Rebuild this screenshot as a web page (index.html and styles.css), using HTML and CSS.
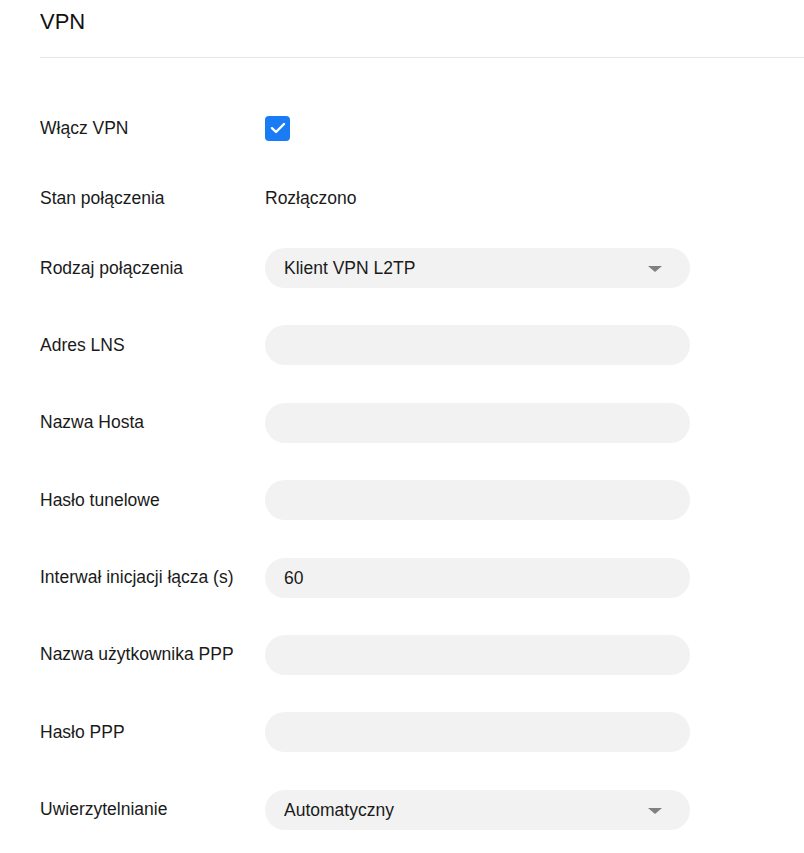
FILE: index.html
```html
<!DOCTYPE html>
<html lang="pl">
  <head>
    <meta charset="UTF-8" />
    <meta name="viewport" content="width=device-width, initial-scale=1.0" />
    <title>VPN</title>
    <link rel="stylesheet" href="styles.css">
  </head>

  <body>
    <div class="page">
      <h1 class="title">VPN</h1>

      <div class="form">
        <div class="row row-tight">
          <div class="label">Włącz VPN</div>
          <div class="control">
            <span class="checkbox">
              <svg width="16" height="12" viewBox="0 0 16 12">
                <path d="M2 6.2 L6 10 L14 2" fill="none" stroke="#fff" stroke-width="2.4" stroke-linecap="round" stroke-linejoin="round" />
              </svg>
            </span>
          </div>
        </div>

        <div class="row row-tight">
          <div class="label">Stan połączenia</div>
          <div class="control">Rozłączono</div>
        </div>

        <div class="row">
          <div class="label">Rodzaj połączenia</div>
          <div class="field select">Klient VPN L2TP<span class="arrow"></span></div>
        </div>

        <div class="row">
          <div class="label">Adres LNS</div>
          <div class="field"></div>
        </div>

        <div class="row">
          <div class="label">Nazwa Hosta</div>
          <div class="field"></div>
        </div>

        <div class="row">
          <div class="label">Hasło tunelowe</div>
          <div class="field"></div>
        </div>

        <div class="row">
          <div class="label">Interwał inicjacji łącza (s)</div>
          <div class="field">60</div>
        </div>

        <div class="row">
          <div class="label">Nazwa użytkownika PPP</div>
          <div class="field"></div>
        </div>

        <div class="row">
          <div class="label">Hasło PPP</div>
          <div class="field"></div>
        </div>

        <div class="row">
          <div class="label">Uwierzytelnianie</div>
          <div class="field select">Automatyczny<span class="arrow"></span></div>
        </div>
      </div>
    </div>
  </body>
</html>
```

FILE: styles.css
```css
body {
  margin: 0;
  background-color: #fff;
  color: #1a1a1a;
  font-family: "Liberation Sans", Arial, Helvetica, sans-serif;
  font-size: 17.5px;
}

.page {
  padding-left: 40px;
}

.title {
  margin: 0;
  padding-top: 5px;
  height: 52px;
  line-height: 34px;
  font-size: 22px;
  font-weight: normal;
  color: #111;
  border-bottom: 1px solid #e6e6e6;
}

.form {
  padding-top: 50px;
}

.row {
  display: flex;
  align-items: center;
  height: 40px;
  margin-bottom: 37.4px;
}

.row-tight {
  margin-bottom: 30px;
}

.label {
  width: 225px;
}

.control {
  display: flex;
  align-items: center;
}

.checkbox {
  display: flex;
  align-items: center;
  justify-content: center;
  width: 25px;
  height: 25px;
  border-radius: 4px;
  background-color: #1a7cf5;
}

.field {
  position: relative;
  box-sizing: border-box;
  width: 425px;
  height: 40px;
  line-height: 40px;
  padding-left: 19px;
  border-radius: 20px;
  background-color: #f2f2f2;
}

.arrow {
  position: absolute;
  right: 28px;
  top: 18px;
  width: 0;
  height: 0;
  border-left: 7px solid transparent;
  border-right: 7px solid transparent;
  border-top: 6px solid #808080;
}
```
